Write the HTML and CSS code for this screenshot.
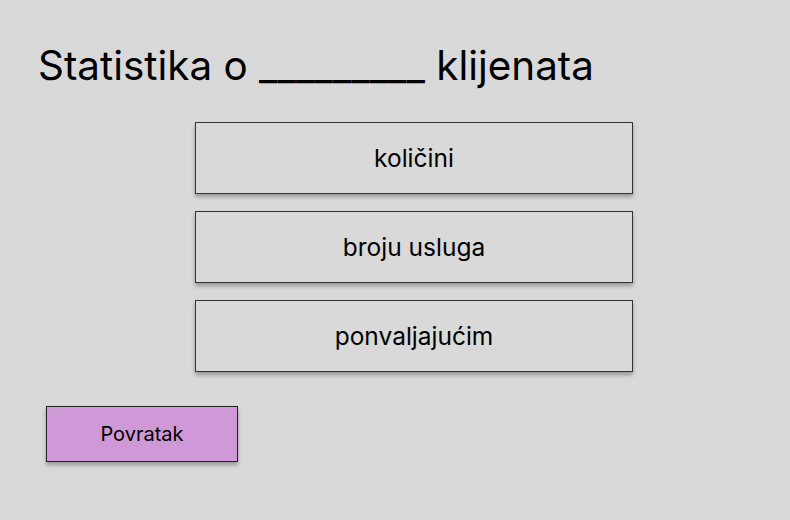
FILE: index.html
```html
<!DOCTYPE html>
<html>
<head>
<meta charset="utf-8">
<link rel="stylesheet" href="styles.css">
</head>
<body>
<div class="page">
  <h1 class="title">Statistika o _________ klijenata</h1>
  <div class="options">
    <div class="option">količini</div>
    <div class="option">broju usluga</div>
    <div class="option">ponvaljajućim</div>
  </div>
  <div class="back">Povratak</div>
</div>
</body>
</html>
```
FILE: styles.css
```css
html, body {
  margin: 0;
  padding: 0;
  background: #d9d9d9;
}
body {
  width: 790px;
  height: 520px;
  overflow: hidden;
  font-family: Inter, "Noto Sans", sans-serif;
  color: #000;
}
.page {
  padding: 41px 0 0 38px;
}
.title {
  margin: 0;
  font-size: 40.4px;
  font-weight: 400;
  line-height: 50px;
  letter-spacing: 0;
}
.options {
  display: flex;
  flex-direction: column;
  gap: 17px;
  margin: 31px 0 0 157px;
  width: 438px;
}
.option {
  box-sizing: border-box;
  height: 72px;
  border: 1px solid #333;
  box-shadow: 0 3px 4px rgba(0,0,0,0.3);
  display: flex;
  align-items: center;
  justify-content: center;
  font-size: 24.5px;
  background: #d9d9d9;
}
.back {
  box-sizing: border-box;
  margin: 34px 0 0 8px;
  width: 192px;
  height: 56px;
  background: #cf99d7;
  border: 1px solid #222;
  box-shadow: 0 3px 4px rgba(0,0,0,0.3);
  display: flex;
  align-items: center;
  justify-content: center;
  font-size: 20px;
}
```
